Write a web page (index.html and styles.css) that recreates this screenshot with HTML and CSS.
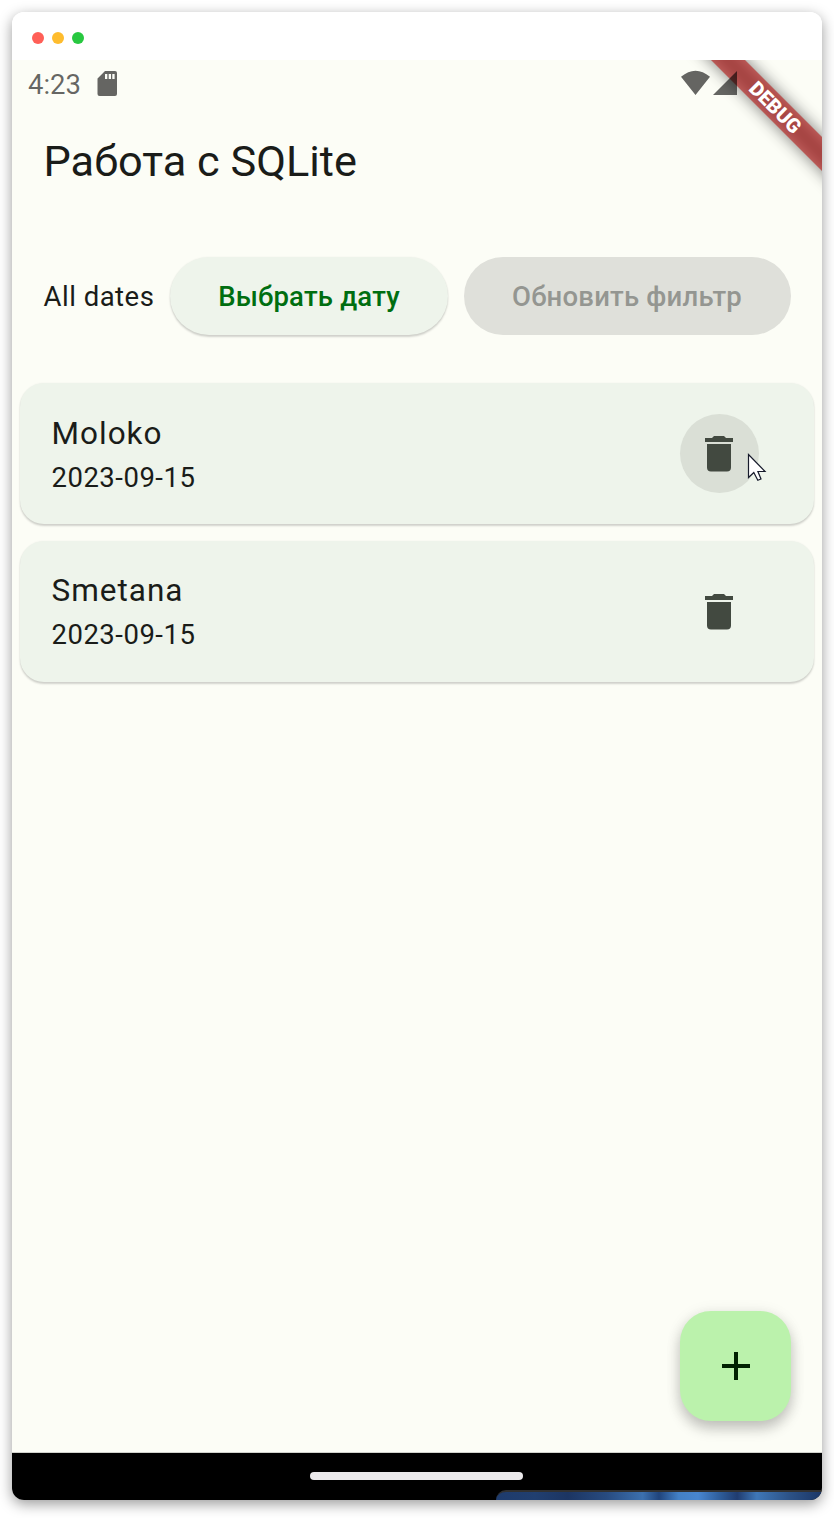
FILE: index.html
```html
<!DOCTYPE html>
<html lang="ru">
<head>
<meta charset="utf-8">
<title>Работа с SQLite</title>
<link rel="stylesheet" href="styles.css">
</head>
<body>
<div class="window">
  <header class="titlebar"><i class="dot red"></i><i class="dot yellow"></i><i class="dot green"></i></header>
  <main class="screen">
    <div class="status">
      <span class="time">4:23</span>
      <svg class="sd" width="20" height="26" viewBox="0 0 20 26"><path fill-rule="evenodd" d="M8 0h10a2 2 0 0 1 2 2v21a2 2 0 0 1-2 2H2.500a2 2 0 0 1-2-2V7.500zM8 3v5h2.300V3zm3.700 0v5H14V3zm3.600 0v5h2.300V3z"/></svg>
      <svg class="signal" width="58" height="26" viewBox="0 0 58 26"><path d="M1 6.800Q15.500-5.500 30 6.800L15.500 25zM57 1v24H33z"/></svg>
    </div>
    <h1 class="heading">Работа с SQLite</h1>
    <div class="filters">
      <span class="range">All dates</span>
      <button class="pill pick">Выбрать дату</button>
      <button class="pill refresh" disabled>Обновить фильтр</button>
    </div>
    <div class="list">
      <article class="card">
        <div class="info"><div class="name">Moloko</div><div class="date">2023-09-15</div></div>
        <button class="delete hovered" aria-label="Delete">
          <svg class="trash" width="28" height="36" viewBox="0 0 28 36"><path d="M2 8h24v23.500a4 4 0 0 1-4 4H6a4 4 0 0 1-4-4zM0 2h7l2-2h10l2 2h7v4H0z"/></svg>
          <svg class="cursor" width="20" height="29" viewBox="0 0 20 29"><path d="M1.500 1.500V24.500L6.800 19.500L10.800 27.300L14 26L10.900 18.500H18z"/></svg>
        </button>
      </article>
      <article class="card">
        <div class="info"><div class="name">Smetana</div><div class="date">2023-09-15</div></div>
        <button class="delete" aria-label="Delete">
          <svg class="trash" width="28" height="36" viewBox="0 0 28 36"><path d="M2 8h24v23.500a4 4 0 0 1-4 4H6a4 4 0 0 1-4-4zM0 2h7l2-2h10l2 2h7v4H0z"/></svg>
        </button>
      </article>
    </div>
    <button class="fab" aria-label="Add"><svg width="28" height="28" viewBox="0 0 28 28"><path d="M12 0h4v12h12v4H16v12h-4V16H0v-4h12z"/></svg></button>
    <div class="banner"><span>DEBUG</span></div>
  </main>
  <footer class="navbar"><i class="handle"></i><i class="wallpaper"></i></footer>
</div>
</body>
</html>
```
FILE: styles.css
```css
* { box-sizing: border-box; }
body { margin: 0; padding: 12px; height: 1518px; overflow: hidden; background: #fff; font-family: Roboto, sans-serif; color: #1a1c19; }
button { border: 0; margin: 0; padding: 0; font-family: inherit; }
svg { display: block; }
.window { width: 810px; height: 1488px; display: flex; flex-direction: column; overflow: hidden; border-radius: 12px; box-shadow: 0 4px 14px rgba(0,0,0,.4); }
.titlebar { height: 48px; flex: none; display: flex; gap: 8px; align-items: center; padding: 4px 20px 0; background: #fff; }
.dot { width: 12px; height: 12px; border-radius: 50%; }
.red { background: #ff5f57; }
.yellow { background: #febc2e; }
.green { background: #28c840; }
.screen { position: relative; flex: 1; display: flex; flex-direction: column; overflow: hidden; background: #fcfdf6; border-bottom: 1px solid #d1d2cc; }
.status { position: relative; z-index: 2; height: 48px; display: flex; align-items: center; padding: 0 84px 0 16px; fill: rgba(0,0,0,.6); color: rgba(0,0,0,.6); }
.time { font-size: 27.5px; line-height: 32px; padding-top: 2px; width: 69px; }
.signal { margin-left: auto; margin-top: -2px; }
.heading { margin: 27px 0 0 31.500px; font-size: 43.3px; line-height: 54px; font-weight: 400; }
.filters { margin: 67px 31px 0 31.500px; height: 79px; display: flex; align-items: center; }
.range { width: 126.500px; padding-top: 1px; font-size: 27.5px; letter-spacing: .5px; white-space: nowrap; }
.pill { height: 78px; padding-top: 1px; border-radius: 39px; font-size: 27.5px; font-weight: 500; letter-spacing: .2px; white-space: nowrap; }
.pick { width: 278px; margin-right: 15.500px; color: #006e10; background: #eef4eb; box-shadow: 0 2px 2px rgba(0,0,0,.17), 0 0 2px rgba(0,0,0,.06); }
.refresh { width: 327px; color: #949691; background: #dfe0da; }
.list { margin: 48px 8px 0; display: flex; flex-direction: column; gap: 17px; }
.card { height: 141px; display: flex; align-items: center; justify-content: space-between; padding: 0 55.500px 0 31.500px; border-radius: 24px; background: #eef4eb; box-shadow: 0 2px 2px rgba(0,0,0,.17), 0 0 2px rgba(0,0,0,.06); }
.name { font-size: 31.5px; line-height: 48px; letter-spacing: 1px; }
.date { font-size: 27.5px; line-height: 40px; letter-spacing: .5px; }
.card + .card .info { padding-bottom: 2px; }
.delete { position: relative; width: 79px; height: 79px; border-radius: 50%; display: flex; align-items: center; justify-content: center; background: transparent; fill: #424940; }
.hovered { background: #dadfd6; }
.cursor { position: absolute; left: 67.500px; top: 39px; fill: #fff; stroke: #161a2b; stroke-width: 1.2; }
.fab { position: absolute; right: 31px; bottom: 31px; width: 111px; height: 110px; display: flex; align-items: center; justify-content: center; border-radius: 31px; background: #bbf2ac; fill: #002201; box-shadow: 0 8px 14px rgba(0,0,0,.2), 0 2px 16px rgba(0,0,0,.09); }
.banner { position: absolute; left: 662.750px; top: 35.250px; width: 200px; height: 24px; transform: rotate(45deg); }
.banner::before { content: ""; position: absolute; inset: 0; background: rgba(0,0,0,.5); filter: blur(7.800px); }
.banner span { position: absolute; inset: 0; padding-left: 1px; background: rgba(183,28,28,.63); color: #fff; text-align: center; font-size: 20px; line-height: 24px; font-weight: 900; }
.navbar { position: relative; height: 47px; flex: none; background: #000; display: flex; justify-content: center; }
.handle { width: 213px; height: 8px; margin: 19px 1px 0 0; border-radius: 4px; background: #ebe9eb; }
.wallpaper { position: absolute; right: 0; bottom: 0; width: 326px; height: 10px; border-top: 2px solid #303030; border-radius: 14px 0 0 0; background: linear-gradient(90deg, #1e3b6c 0, #213f70 12%, #1c3562 22%, #284b80 34%, #3c70ae 45%, #20447c 50%, #4380c5 56%, #4886d0 62%, #2d5b98 69%, #203c70 74%, #3f77b7 80%, #2c5287 90%, #1b3666 100%); }
```
